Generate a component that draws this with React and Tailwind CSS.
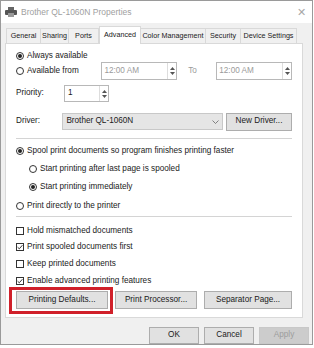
import React from 'react';

const FONT = { fontFamily: '"Liberation Sans", Arial, sans-serif' };

const Radio = ({ on, label }) => (
  <div className="flex items-center gap-[3px] whitespace-nowrap">
    <span className="w-[8px] h-[8px] rounded-full border border-[#333] bg-white flex items-center justify-center shrink-0">
      {on && <span className="w-[4px] h-[4px] rounded-full bg-[#222]" />}
    </span>
    <span>{label}</span>
  </div>
);

const Check = ({ on, label }) => (
  <div className="flex items-center gap-[3px] whitespace-nowrap">
    <span className="w-[8px] h-[8px] border border-[#333] bg-white flex items-center justify-center shrink-0">
      {on && (
        <svg width="6" height="6" viewBox="0 0 6 6">
          <path d="M0.6 3.2 L2.3 4.8 L5.4 1.2" fill="none" stroke="#222" strokeWidth="0.9" />
        </svg>
      )}
    </span>
    <span>{label}</span>
  </div>
);

const Spin = () => (
  <div className="w-[9px] flex flex-col items-center justify-center gap-[2px] border-l border-[#ddd] h-full">
    <svg width="5" height="3" viewBox="0 0 5 3"><path d="M0 3 L2.5 0 L5 3Z" fill="#555" /></svg>
    <svg width="5" height="3" viewBox="0 0 5 3"><path d="M0 0 L2.5 3 L5 0Z" fill="#555" /></svg>
  </div>
);

const TimeBox = () => (
  <div className="w-[78px] h-[18px] border border-[#b8b8b8] bg-white flex items-center">
    <span className="flex-1 pl-[2px] text-[#9a9a9a]">12:00 AM</span>
    <Spin />
  </div>
);

const Btn = ({ children, w, h = 'h-[18px]', disabled }) => (
  <div
    className={`${h} border flex items-center justify-center whitespace-nowrap ${w} ${
      disabled ? 'border-[#c8c8c8] bg-[#cccccc] text-[#9c9c9c]' : 'border-[#adadad] bg-[#e1e1e1] text-[#1a1a1a]'
    }`}
  >
    {children}
  </div>
);

const tabs = ['General', 'Sharing', 'Ports', 'Advanced', 'Color Management', 'Security', 'Device Settings'];
const tabW = ['w-[35px]', 'w-[29px]', 'w-[31px]', 'w-[42px]', 'w-[66px]', 'w-[36px]', 'w-[57px]'];

export default function App() {
  return (
    <div className="w-[314px] h-[348px] bg-white overflow-hidden text-[8.2px] text-[#1a1a1a]" style={FONT}>
      <div className="w-[313px] h-[345px] bg-[#f0f0f0] border border-[#9a9a9a] flex flex-col">
        {/* title bar */}
        <div className="h-[22px] bg-white flex items-center pl-[4px] pr-[6px] shrink-0">
          <svg width="12" height="10" viewBox="0 0 12 10" className="mr-[4px]">
            <rect x="3" y="0" width="6" height="3" fill="#666" />
            <rect x="0" y="3" width="12" height="5" rx="1" fill="#555" />
            <rect x="3" y="6" width="6" height="4" fill="#999" />
          </svg>
          <span className="text-[#a0a0a0] text-[8.5px]">Brother QL-1060N Properties</span>
          <span className="ml-auto text-[#a8a8a8] text-[11px] leading-none">✕</span>
        </div>

        {/* tabs */}
        <div className="h-[18px] flex items-end pl-[6px] mt-[2px] shrink-0 text-[7.2px]">
          {tabs.map((t, i) =>
            t === 'Advanced' ? (
              <div
                key={t}
                className={`${tabW[i]} h-[18px] bg-white border border-[#d9d9d9] border-b-0 flex items-center justify-center whitespace-nowrap relative z-10 -mb-px`}
              >
                {t}
              </div>
            ) : (
              <div
                key={t}
                className={`${tabW[i]} h-[15px] bg-[#f0f0f0] border border-[#d9d9d9] border-b-0 -ml-px flex items-center justify-center whitespace-nowrap`}
              >
                {t}
              </div>
            )
          )}
        </div>

        {/* panel */}
        <div className="ml-[4px] w-[298px] h-[275px] bg-white border border-[#d9d9d9] flex flex-col px-[10px] pt-[6px]">
          <div className="h-[12px] flex items-center">
            <Radio on label="Always available" />
          </div>
          <div className="h-[18px] flex items-center">
            <div className="w-[88px]">
              <Radio label="Available from" />
            </div>
            <TimeBox />
            <span className="w-[40px] pl-[11px] text-[#9a9a9a]">To</span>
            <TimeBox />
          </div>
          <div className="h-[17px] mt-[5px] flex items-center">
            <span className="w-[48px]">Priority:</span>
            <div className="w-[45px] h-[17px] border border-[#b8b8b8] bg-white flex items-center">
              <span className="flex-1 pl-[3px]">1</span>
              <Spin />
            </div>
          </div>
          <div className="h-[17px] mt-[11px] flex items-center">
            <span className="w-[48px]">Driver:</span>
            <div className="w-[166px] h-[17px] border border-[#c8c8c8] bg-[#e5e5e5] flex items-center px-[3px]">
              <span className="flex-1">Brother QL-1060N</span>
              <svg width="7" height="4" viewBox="0 0 7 4">
                <path d="M0.5 0.5 L3.5 3.5 L6.5 0.5" fill="none" stroke="#666" strokeWidth="0.8" />
              </svg>
            </div>
            <div className="ml-[3px]">
              <Btn w="w-[66px]">New Driver...</Btn>
            </div>
          </div>
          <div className="h-px bg-[#d4d4d4] mt-[8px]" />
          <div className="h-[14px] mt-[5px] flex items-center">
            <Radio on label="Spool print documents so program finishes printing faster" />
          </div>
          <div className="h-[14px] mt-[4px] flex items-center pl-[13px]">
            <Radio label="Start printing after last page is spooled" />
          </div>
          <div className="h-[14px] mt-[4px] flex items-center pl-[13px]">
            <Radio on label="Start printing immediately" />
          </div>
          <div className="h-[14px] mt-[5px] flex items-center">
            <Radio label="Print directly to the printer" />
          </div>
          <div className="h-px bg-[#d4d4d4] mt-[3px]" />
          <div className="h-[14px] mt-[7px] flex items-center">
            <Check label="Hold mismatched documents" />
          </div>
          <div className="h-[14px] mt-[2px] flex items-center">
            <Check on label="Print spooled documents first" />
          </div>
          <div className="h-[14px] mt-[3px] flex items-center">
            <Check label="Keep printed documents" />
          </div>
          <div className="h-[14px] mt-[3px] flex items-center">
            <Check on label="Enable advanced printing features" />
          </div>
          <div className="h-[18px] mt-[3px] flex items-center gap-[7px]">
            <div className="relative">
              <Btn w="w-[92px]">Printing Defaults...</Btn>
              <div className="absolute left-[-7px] top-[-4px] w-[104px] h-[27px] border-[3px] border-[#d0202a] pointer-events-none" />
            </div>
            <Btn w="w-[85px]">Print Processor...</Btn>
            <Btn w="w-[91px]">Separator Page...</Btn>
          </div>
        </div>

        {/* bottom buttons */}
        <div className="flex justify-end gap-[5px] pr-[3px] mt-[9px]">
          <Btn w="w-[50px]" h="h-[17px]">OK</Btn>
          <Btn w="w-[50px]" h="h-[17px]">Cancel</Btn>
          <Btn w="w-[50px]" h="h-[17px]" disabled>Apply</Btn>
        </div>
      </div>
    </div>
  );
}
